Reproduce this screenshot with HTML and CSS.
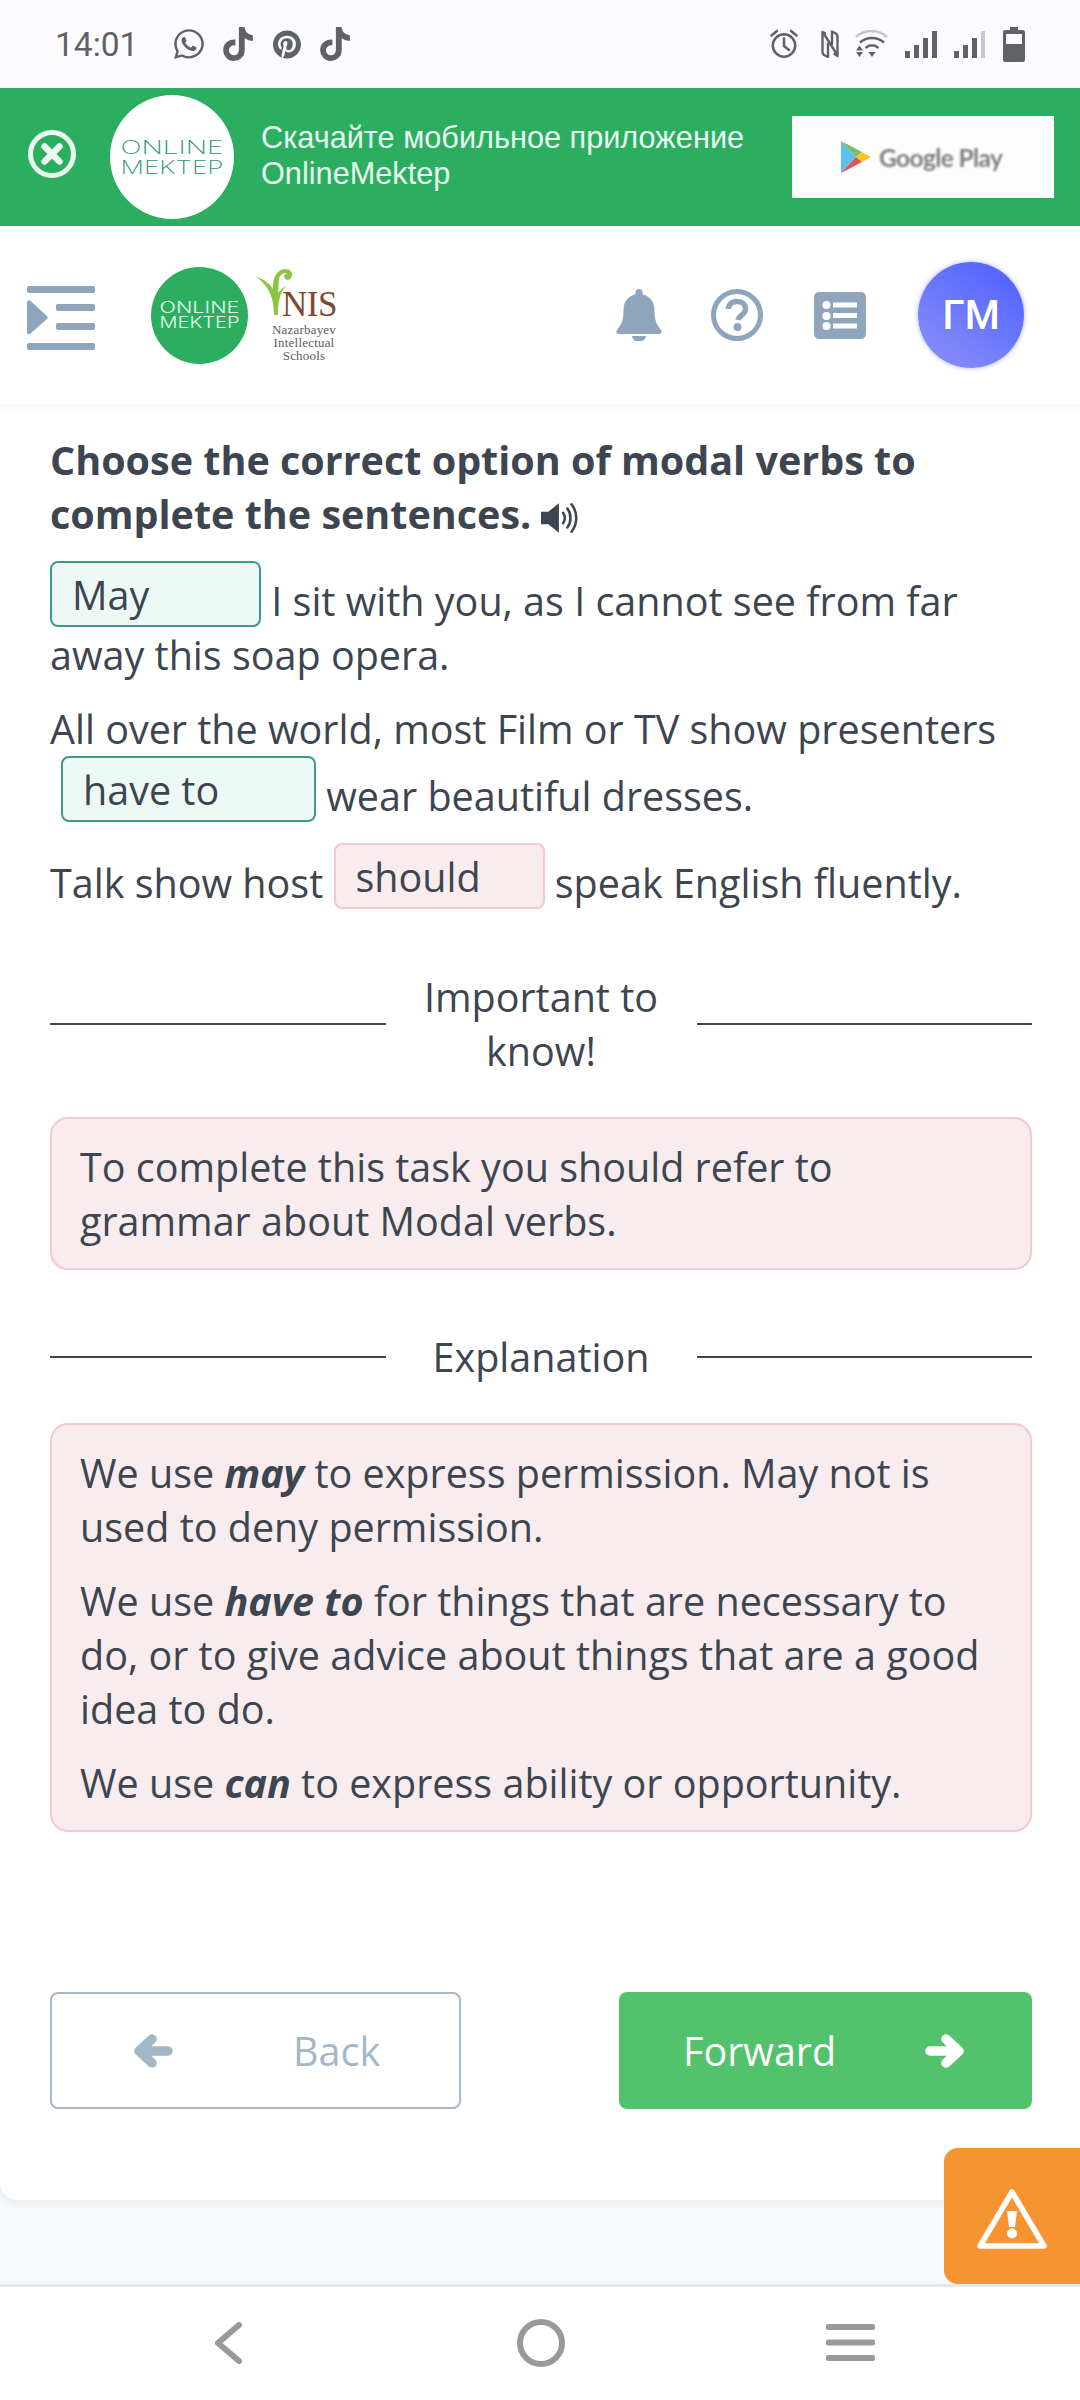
FILE: index.html
```html
<!DOCTYPE html>
<html lang="en">
<head>
<meta charset="utf-8">
<title>OnlineMektep</title>
<link rel="stylesheet" href="styles.css">
</head>
<body>
<div class="screen">
  <div class="status">
    <span class="time">14:01</span>
    <svg class="si si-wa" viewBox="0 0 448 512"><path d="M380.9 97.1C339 55.1 283.2 32 223.9 32c-122.4 0-222 99.6-222 222 0 39.1 10.2 77.3 29.6 111L0 480l117.7-30.9c32.4 17.7 68.9 27 106.1 27h.1c122.3 0 224.1-99.6 224.1-222 0-59.3-25.2-115-67.1-157zm-157 341.6c-33.2 0-65.7-8.9-94-25.7l-6.7-4-69.8 18.3L72 359.2l-4.4-7c-18.5-29.4-28.2-63.3-28.2-98.2 0-101.7 82.8-184.5 184.6-184.5 49.3 0 95.6 19.2 130.4 54.1 34.8 34.9 56.2 81.2 56.1 130.5 0 101.8-84.9 184.6-186.6 184.6zm101.2-138.2c-5.5-2.8-32.8-16.2-37.9-18-5.1-1.9-8.8-2.8-12.5 2.8-3.7 5.6-14.3 18-17.6 21.8-3.2 3.7-6.5 4.2-12 1.4-32.6-16.3-54-29.1-75.5-66-5.7-9.8 5.7-9.1 16.3-30.3 1.8-3.7.9-6.9-.5-9.7-1.4-2.8-12.5-30.1-17.1-41.2-4.5-10.8-9.1-9.3-12.5-9.5-3.2-.2-6.9-.2-10.6-.2-3.7 0-9.7 1.4-14.8 6.9-5.1 5.6-19.4 19-19.4 46.3 0 27.3 19.9 53.7 22.6 57.4 2.8 3.7 39.1 59.7 94.8 83.8 35.2 15.2 49 16.5 66.6 13.9 10.7-1.6 32.8-13.4 37.4-26.4 4.6-13 4.6-24.1 3.2-26.4-1.3-2.5-5-3.9-10.5-6.6z"/></svg>
    <svg class="si si-tt" viewBox="0 0 448 512"><path d="M448,209.91a210.06,210.06,0,0,1-122.77-39.25V349.38A162.55,162.55,0,1,1,185,188.31V278.2a74.62,74.62,0,1,0,52.23,71.18V0l88,0a121.18,121.18,0,0,0,1.86,22.17h0A122.18,122.18,0,0,0,381,102.39a121.43,121.43,0,0,0,67,20.14Z"/></svg>
    <svg class="si si-pin" viewBox="0 0 496 512"><path d="M496 256c0 137-111 248-248 248-25.6 0-50.2-3.9-73.4-11.1 10.1-16.5 25.2-43.5 30.8-65 3-11.6 15.4-59 15.4-59 8.1 15.4 31.7 28.5 56.8 28.5 74.8 0 128.7-68.8 128.7-154.3 0-81.9-66.9-143.2-152.9-143.2-107 0-163.9 71.8-163.9 150.1 0 36.4 19.4 81.7 50.3 96.1 4.7 2.2 7.2 1.2 8.3-3.3.8-3.4 5-20.3 6.9-28.1.6-2.5.3-4.7-1.7-7.1-10.1-12.5-18.3-35.3-18.3-56.6 0-54.7 41.4-107.6 112-107.6 60.9 0 103.6 41.5 103.6 100.9 0 67.1-33.9 113.6-78 113.6-24.3 0-42.6-20.1-36.7-44.8 7-29.5 20.5-61.3 20.5-82.6 0-19-10.2-34.9-31.4-34.9-24.9 0-44.9 25.7-44.9 60.2 0 22 7.4 36.8 7.4 36.8s-24.5 103.8-29 123.2c-5 21.4-3 51.6-.9 71.2C65.4 450.9 0 361.1 0 256 0 119 111 8 248 8s248 111 248 248z"/></svg>
    <svg class="si si-tt2" viewBox="0 0 448 512"><path d="M448,209.91a210.06,210.06,0,0,1-122.77-39.25V349.38A162.55,162.55,0,1,1,185,188.31V278.2a74.62,74.62,0,1,0,52.23,71.18V0l88,0a121.18,121.18,0,0,0,1.86,22.17h0A122.18,122.18,0,0,0,381,102.39a121.43,121.43,0,0,0,67,20.14Z"/></svg>
    <span class="status-gap"></span>
    <svg class="si si-alarm" viewBox="0 0 30 30"><g fill="none" stroke="#5f6367" stroke-width="2.6"><circle cx="15" cy="16.5" r="11.2"/><path d="M15 9.5V17l5 4M2.500 6.500 8 2M27.500 6.500 22 2" stroke-linecap="round"/></g></svg>
    <svg class="si si-nfc" viewBox="0 0 18 28"><g fill="none" stroke="#5f6367" stroke-width="2.400" stroke-linecap="round" stroke-linejoin="round"><path d="M4 3 1.500 2V22Q1.500 24.500 4 25.500l3 1.500V14"/><path d="M3 4 15 23"/><path d="M11 14V1.500l3 1.500Q16.500 4 16.500 7v19l-3-2"/></g></svg>
    <svg class="si si-wifi" viewBox="0 0 33 28"><g fill="none" stroke-width="2.600"><path d="M1 7C10-1 23-1 32 7" stroke="#c6c8ca"/><path d="M5 12.500c7-6 17-6 24 0M10.500 18c4-3.500 9-3.500 13 0" stroke="#5f6367"/></g><path d="M13.500 22h7l-3.500 5zM1 22h7l-3.500 5zM4.500 15.500 8 20.500H1z" fill="#5f6367"/></svg>
    <svg class="si si-sig" viewBox="0 0 32 28"><path d="M0 21h5v7H0zM9 15h5v13H9zM18 8h5v20h-5zM27 1h5v27h-5z" fill="#5f6367"/></svg>
    <svg class="si si-sig2" viewBox="0 0 32 28"><path d="M0 21h5v7H0zM9 15h5v13H9zM18 8h5v20h-5z" fill="#5f6367"/><path d="M27 1h4v27h-4z" fill="#c6c8ca"/></svg>
    <svg class="si si-batt" viewBox="0 0 22 35"><path d="M7 0h8v3h5a2 2 0 0 1 2 2v28a2 2 0 0 1-2 2H2a2 2 0 0 1-2-2V5a2 2 0 0 1 2-2h5z" fill="#5f6367"/><path d="M3 7h16v10H3z" fill="#fcfcfe"/></svg>
  </div>

  <div class="banner">
    <svg class="close-ic" viewBox="0 0 48 48"><circle cx="24" cy="24" r="21.500" fill="none" stroke="#eafaf0" stroke-width="5"/><path d="M16.500 16.500 31.500 31.500M31.500 16.500 16.500 31.500" stroke="#eafaf0" stroke-width="6.500" stroke-linecap="round"/></svg>
    <div class="logo-big">
      <svg class="logo-svg" viewBox="0 0 124 124"><text x="62" y="59" text-anchor="middle" textLength="103" lengthAdjust="spacingAndGlyphs" class="logo-t">ONLINE</text><text x="62" y="79" text-anchor="middle" textLength="103" lengthAdjust="spacingAndGlyphs" class="logo-t">MEKTEP</text></svg>
    </div>
    <div class="banner-text">Скачайте мобильное приложение<br>OnlineMektep</div>
    <div class="gplay">
      <svg class="gplay-ic" viewBox="0 0 30 32"><path d="M0 0 15 16 0 32z" fill="#5bc2ee"/><path d="M0 0 21 11 15 16z" fill="#7dbb6a"/><path d="M21 11 30 16 21 21 15 16z" fill="#f7c71f"/><path d="M0 32 15 16 21 21z" fill="#e0534f"/></svg>
      <span class="gplay-t">Google Play</span>
    </div>
  </div>

  <header class="topbar">
    <svg class="menu-ic" viewBox="0 0 68 64"><g fill="#8fa5bc"><rect x="0" y="0" width="68" height="7" rx="2"/><rect x="29" y="18" width="39" height="7" rx="2"/><rect x="29" y="37" width="39" height="7" rx="2"/><rect x="0" y="57" width="68" height="7" rx="2"/><path d="M0 16a2 2 0 0 1 3-1.500L20 30a2 2 0 0 1 0 3L3 48a2 2 0 0 1-3-1.500z"/></g></svg>
    <div class="logo-small">
      <svg class="logo-svg" viewBox="0 0 97 97"><text x="48.500" y="46" text-anchor="middle" textLength="80" lengthAdjust="spacingAndGlyphs" class="logo-s">ONLINE</text><text x="48.500" y="61" text-anchor="middle" textLength="80" lengthAdjust="spacingAndGlyphs" class="logo-s">MEKTEP</text></svg>
    </div>
    <div class="nis">
      <svg class="nis-sprout" viewBox="0 0 42 48"><path d="M21 48C21 34 18 20 2 9 10 12 16 16 20 22 19 12 24 2 32 2c6 0 9 5 6 9-2 3-7 2-7-2 0-2 3-3 4-1-1-3-8-2-9 4-1 5 0 9-1 14 2-3 5-5 9-8-5 5-9 12-9 30z" fill="#8cc63f"/></svg>
      <div class="nis-name">NIS</div>
      <div class="nis-sub">Nazarbayev<br>Intellectual<br>Schools</div>
    </div>
    <span class="topbar-gap"></span>
    <svg class="ic-bell" viewBox="0 0 46 52"><path d="M23 0a3.500 3.500 0 0 1 3.500 3.500v2C34 7 38.500 13 38.500 21c0 9 1.500 14 6.500 20 1.500 2 .5 4-2 4H3c-2.500 0-3.500-2-2-4 5-6 6.500-11 6.500-20 0-8 4.500-14 12-15.500v-2A3.500 3.500 0 0 1 23 0zM16 47h14a7 5.500 0 0 1-14 0z" fill="#8fa5bc"/></svg>
    <svg class="ic-help" viewBox="0 0 52 52"><circle cx="26" cy="26" r="23.500" fill="none" stroke="#8fa5bc" stroke-width="5"/><path d="M17.500 20c0-5 4-7.500 8.500-7.500s8.500 2.500 8.500 7.500c0 6-6.500 6-7.500 11" fill="none" stroke="#8fa5bc" stroke-width="5.500"/><circle cx="26.500" cy="38" r="4" fill="#8fa5bc"/></svg>
    <svg class="ic-list" viewBox="0 0 52 47"><rect width="52" height="47" rx="5" fill="#8fa5bc"/><g fill="#fff"><circle cx="12.500" cy="13" r="4"/><circle cx="12.500" cy="24" r="4"/><circle cx="12.500" cy="34" r="4"/><rect x="19" y="10.500" width="24" height="5"/><rect x="19" y="21" width="24" height="5"/><rect x="19" y="31.500" width="24" height="5"/></g></svg>
    <div class="avatar">ГМ</div>
  </header>

  <main class="card">
    <h1 class="task-title">Choose the correct option of modal verbs to complete the sentences. <svg class="ic-sound" viewBox="0 0 38 32"><path d="M0 10h7L17 2v28L7 22H0z" fill="#3c4550"/><path d="M21 11c2 3 2 7 0 10M25 7c4 5 4 13 0 18M29 3c6 8 6 18 0 26" fill="none" stroke="#3c4550" stroke-width="2.400" stroke-linecap="round"/></svg></h1>
    <p class="line"><span class="blank blank-ok blank-s">May</span> I sit with you, as I cannot see from far away this soap opera.</p>
    <p class="line">All over the world, most Film or TV show presenters <span class="blank blank-ok blank-l">have to</span> wear beautiful dresses.</p>
    <p class="line">Talk show host <span class="blank blank-bad blank-s">should</span> speak English fluently.</p>

    <div class="divider divider-first"><span class="divider-text">Important to know!</span></div>
    <div class="note">
      <p class="note-p">To complete this task you should refer to grammar about Modal verbs.</p>
    </div>
    <div class="divider"><span class="divider-text">Explanation</span></div>
    <div class="note">
      <p class="note-p">We use <b class="em">may</b> to express permission. May not is used to deny permission.</p>
      <p class="note-p">We use <b class="em">have to</b> for things that are necessary to do, or to give advice about things that are a good idea to do.</p>
      <p class="note-p">We use <b class="em">can</b> to express ability or opportunity.</p>
    </div>

    <div class="actions">
      <div class="btn btn-back">
        <svg class="arrow" viewBox="0 0 40 34"><path d="M19 5 6 17l13 12M6 17h29" fill="none" stroke="currentColor" stroke-width="9.500" stroke-linecap="round" stroke-linejoin="round"/></svg>
        <span>Back</span>
      </div>
      <div class="btn btn-next">
        <span>Forward</span>
        <svg class="arrow arrow-right" viewBox="0 0 40 34"><path d="M19 5 6 17l13 12M6 17h29" fill="none" stroke="currentColor" stroke-width="9.500" stroke-linecap="round" stroke-linejoin="round"/></svg>
      </div>
    </div>
  </main>

  <div class="footer-space"></div>
  <div class="report">
    <svg class="report-ic" viewBox="0 0 70 62"><path d="M35 4 67 58H3z" fill="none" stroke="#fff" stroke-width="5.500" stroke-linejoin="round"/><path d="M30 23h10l-2 16h-6z" fill="#fff"/><circle cx="35" cy="45.500" r="5" fill="#fff"/></svg>
  </div>

  <nav class="navbar">
    <svg class="nav-back" viewBox="0 0 30 42"><path d="M26 3 5 21l21 18" fill="none" stroke="#999" stroke-width="6" stroke-linecap="round" stroke-linejoin="round"/></svg>
    <svg class="nav-home" viewBox="0 0 48 48"><circle cx="24" cy="24" r="21" fill="none" stroke="#999" stroke-width="6"/></svg>
    <svg class="nav-menu" viewBox="0 0 49 38"><g fill="#999"><rect width="49" height="6" rx="2"/><rect y="15.500" width="49" height="6" rx="2"/><rect y="31" width="49" height="6" rx="2"/></g></svg>
  </nav>
</div>
</body>
</html>
```

FILE: styles.css
```css
* { box-sizing: border-box; }
html, body { margin: 0; padding: 0; }
body { width: 1080px; height: 2400px; overflow: hidden; background: #fff; font-family: "Open Sans", "Noto Sans", sans-serif; color: #3c4550; }
.screen { position: relative; width: 1080px; height: 2400px; display: flex; flex-direction: column; background: #f5f9fb; }

.status { height: 88px; flex: none; display: flex; align-items: center; padding: 0 55px; background: #fcfcfe; }
.time { font-family: Roboto, sans-serif; font-size: 33.500px; color: #5f6367; width: 119px; }
.si { display: block; fill: #5f6367; flex: none; }
.si-wa { width: 30px; height: 34px; }
.si-tt { width: 30px; height: 34px; margin-left: 19px; }
.si-pin { width: 28px; height: 29px; margin-left: 20px; }
.si-tt2 { width: 30px; height: 34px; margin-left: 19px; }
.status-gap { flex: 1; }
.si-alarm { width: 30px; height: 30px; }
.si-nfc { width: 18px; height: 28px; margin-left: 22px; }
.si-wifi { width: 33px; height: 28px; margin-left: 16px; }
.si-sig { width: 32px; height: 28px; margin-left: 17px; }
.si-sig2 { width: 32px; height: 28px; margin-left: 17px; }
.si-batt { width: 22px; height: 35px; margin-left: 17px; }

.banner { height: 138px; flex: none; display: flex; align-items: center; background: #2bae60; padding-left: 28px; }
.close-ic { width: 48px; height: 48px; flex: none; margin-top: -6px; }
.logo-big { width: 124px; height: 124px; border-radius: 50%; background: #fff; margin-left: 34px; flex: none; }
.logo-svg { display: block; width: 100%; height: 100%; }
.logo-t { font-family: Inter, sans-serif; font-weight: 200; font-size: 19px; fill: #2a9a6b; }
.logo-s { font-family: Inter, sans-serif; font-weight: 300; font-size: 15.500px; fill: #e6f8ee; }
.banner-text { width: 531px; margin-left: 27px; font-family: "Liberation Sans", Arial, sans-serif; font-size: 30.700px; line-height: 36px; color: #e8fbf0; margin-top: -2px; }
.gplay { width: 262px; height: 82px; background: #fdfdfe; display: flex; align-items: center; padding-left: 49px; flex: none; }
.gplay-ic { width: 30px; height: 32px; flex: none; filter: blur(.6px); }
.gplay-t { font-family: "Lato", sans-serif; font-size: 24.500px; font-weight: 700; color: #7f7f83; margin-left: 8px; letter-spacing: -.6px; filter: blur(1px); }

.topbar { height: 178px; flex: none; display: flex; align-items: center; background: #fff; padding: 0 56px 0 27px; position: relative; z-index: 1; box-shadow: 0 3px 8px rgba(90, 100, 110, .08); }
.menu-ic { width: 68px; height: 64px; flex: none; margin-top: 6px; }
.logo-small { width: 97px; height: 97px; border-radius: 50%; background: #2bae60; margin-left: 56px; flex: none; }
.nis { position: relative; width: 84px; height: 96px; margin-left: 5px; flex: none; }
.nis-sprout { position: absolute; left: 0; top: 0; width: 42px; height: 48px; }
.nis-name { position: absolute; left: 29px; top: 20px; font-family: "Liberation Serif", serif; font-size: 35px; line-height: 35px; color: #7a4a30; letter-spacing: -.5px; }
.nis-sub { position: absolute; left: 15px; top: 56px; width: 72px; font-family: "Liberation Serif", serif; font-size: 13px; line-height: 13px; letter-spacing: .2px; text-align: center; color: #5f5a56; }
.topbar-gap { flex: 1; }
.ic-bell { width: 46px; height: 52px; flex: none; }
.ic-help { width: 52px; height: 52px; margin-left: 49px; flex: none; }
.ic-list { width: 52px; height: 47px; margin-left: 51px; flex: none; }
.avatar { width: 106px; height: 106px; border-radius: 50%; margin-left: 52px; flex: none; display: flex; align-items: center; justify-content: center; font-family: Roboto, sans-serif; font-weight: 500; font-size: 40px; color: #fff; background: linear-gradient(215deg, #5566ff 15%, #8088f7 80%); box-shadow: 0 0 5px rgba(90, 100, 240, .5); }

.card { flex: none; height: 1796px; background: #fff; padding: 29px 48px 0 50px; border-bottom-left-radius: 18px; box-shadow: 0 2px 8px rgba(90, 100, 110, .1); }
.task-title { margin: 0 0 20px; font-size: 39.500px; line-height: 54px; font-weight: 700; }
.ic-sound { width: 40px; height: 34px; vertical-align: -6px; margin-left: -1px; }
.line { margin: 0 0 20px; font-size: 39.500px; line-height: 54px; }
.blank { display: inline-block; height: 66px; padding: 5px 0 3px 20px; border-radius: 8px; border: 2.500px solid; line-height: 54px; vertical-align: 6px; }
.blank-s { width: 211px; }
.blank-l { width: 255px; margin-left: 11px; }
.blank-ok { background: #ecf9f4; border-color: #3d9a8b; }
.blank-bad { background: #f8ecee; border-color: #f3c9ce; }

.divider { display: flex; align-items: center; margin: 0 0 39px; }
.divider-first { margin-top: 60px; }
.divider::before, .divider::after { content: ""; flex: 1; height: 2.500px; background: #3c4550; }
.divider-text { width: 311px; padding: 0 30px; text-align: center; font-size: 39.500px; line-height: 54px; }

.note { background: #f8ecee; border: 2px solid #f3c9ce; border-radius: 18px; padding: 21px 28px 20px; margin-bottom: 60px; }
.note-p { margin: 0 0 20px; font-size: 39.500px; line-height: 54px; }
.note-p:last-child { margin-bottom: 0; }
.em { font-weight: 700; font-style: italic; }

.actions { display: flex; justify-content: space-between; margin-top: 160px; }
.btn { width: 412px; height: 117px; border-radius: 8px; display: flex; align-items: center; font-size: 39.500px; }
.btn-back { border: 2px solid #a8b8c5; color: #a3b8c6; padding: 0 0 0 81px; gap: 120px; width: 411px; }
.btn-next { background: #52c26c; color: #fff; padding: 0 0 0 64px; gap: 89px; width: 413px; }
.arrow { width: 40px; height: 34px; flex: none; }
.arrow-right { transform: scaleX(-1); }

.footer-space { flex: 1; }
.report { position: absolute; right: 0; top: 2148px; width: 136px; height: 136px; background: #f59430; border-radius: 14px 0 0 14px; display: flex; align-items: center; justify-content: center; padding-top: 6px; }
.report-ic { width: 70px; height: 62px; }
.navbar { flex: none; height: 116px; background: #fff; border-top: 3px solid #e4e7e8; display: flex; align-items: center; padding: 0 0 2px 213px; }
.nav-back { width: 30px; height: 42px; }
.nav-home { width: 48px; height: 48px; margin-left: 274px; }
.nav-menu { width: 49px; height: 38px; margin-left: 261px; }
```
